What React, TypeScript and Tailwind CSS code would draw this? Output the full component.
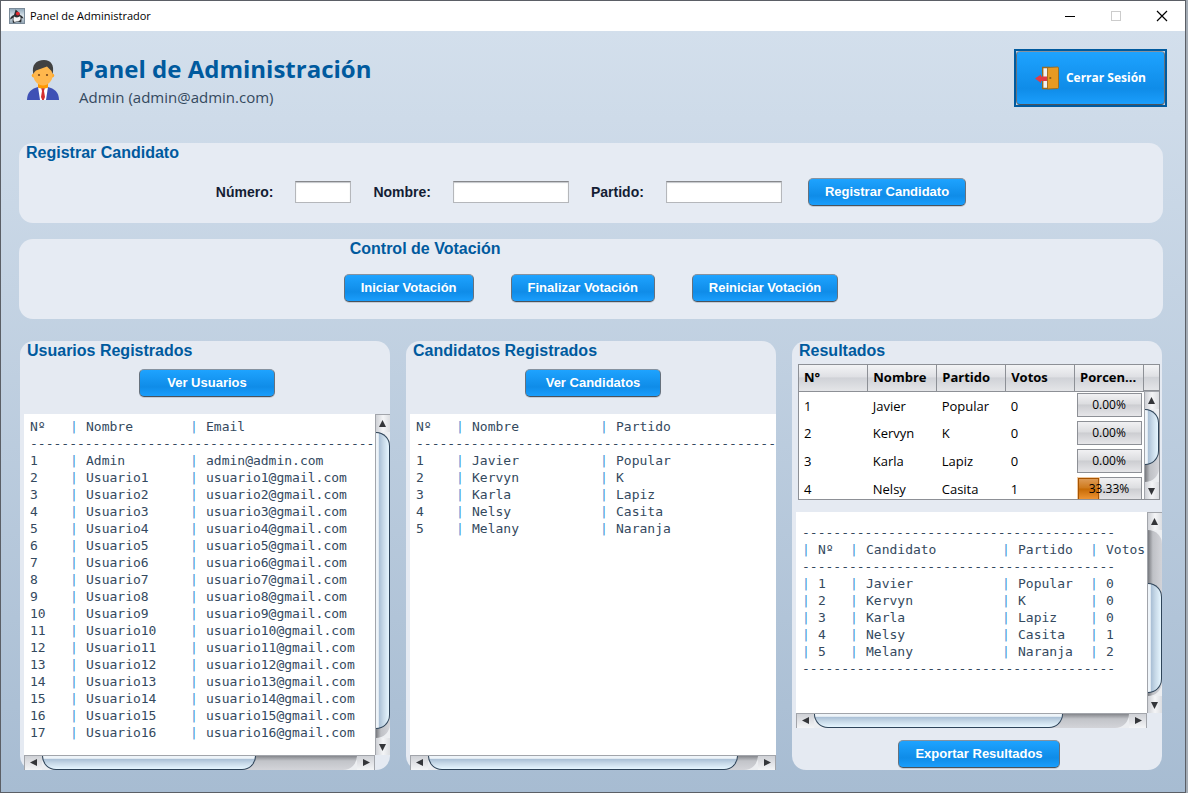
import type { ReactNode } from "react";

const UI_FONT = "font-['Open_Sans','Noto_Sans',sans-serif]";
const SANS_FONT = "font-['Liberation_Sans',Arial,sans-serif]";
const MONO_FONT = "font-['DejaVu_Sans_Mono','Liberation_Mono',monospace]";

const users = [
  ["1", "Admin", "admin@admin.com"],
  ...Array.from({ length: 16 }, (_, i) => [
    String(i + 2),
    `Usuario${i + 1}`,
    `usuario${i + 1}@gmail.com`,
  ]),
];

const candidates = [
  { id: "1", name: "Javier", party: "Popular", votes: 0, percent: 0 },
  { id: "2", name: "Kervyn", party: "K", votes: 0, percent: 0 },
  { id: "3", name: "Karla", party: "Lapiz", votes: 0, percent: 0 },
  { id: "4", name: "Nelsy", party: "Casita", votes: 1, percent: 33.33 },
  { id: "5", name: "Melany", party: "Naranja", votes: 2, percent: 66.67 },
];

const VISIBLE_RESULTS = 4;

function JavaIcon() {
  return (
    <svg width="16" height="16" viewBox="0 0 16 16" aria-hidden="true">
      <defs>
        <linearGradient id="java-bg" x1="0" y1="0" x2="0" y2="1">
          <stop offset="0" stopColor="#8ea6b8" />
          <stop offset="0.5" stopColor="#dde6ec" />
          <stop offset="1" stopColor="#8fa2b1" />
        </linearGradient>
      </defs>
      <rect x="0.5" y="0.5" width="15" height="15" fill="url(#java-bg)" stroke="#7b8b99" />
      <path d="M6.500 1.500 C8 2.500 10.500 4.500 11 7 C12.500 7.500 14 8.500 14.500 10.500 L12.500 10 C12.500 12.500 12.500 13.500 12 14.500 L9 13.500 L4 15 C3.500 13 3.500 11.500 4 10 L1 11.500 C1.500 9 3 7.500 5 7 C5.500 5 6.500 3 6.500 1.500 Z" fill="#2b2f33" />
      <path d="M5 8.500 C7.500 10 9.500 9.500 11 8.300 C12.300 10.500 11.500 12.800 9.500 13 L5.500 14 C4 12.500 4.300 10.500 5 8.500 Z" fill="#f5f5f5" />
      <circle cx="8.800" cy="5.600" r="1.900" fill="#e0282e" />
    </svg>
  );
}

function AdminAvatar() {
  return (
    <svg width="32" height="40" viewBox="0 0 32 40" aria-hidden="true">
      <path d="M0 40 C0 32 5 28.500 11 27 L21 27 C27 28.500 32 32 32 40 Z" fill="#3f51b5" />
      <path d="M11 27 L16 29 L21 27 L19 40 H13 Z" fill="#fff" />
      <path d="M11 23 H21 V27.500 C19 29 13 29 11 27.500 Z" fill="#ff9800" />
      <path d="M14.300 28.500 H17.700 L17 31 L18 37 L16.800 40 H15.200 L14 37 L15 31 Z" fill="#d32f2f" />
      <circle cx="6.800" cy="15.500" r="2" fill="#ffa726" />
      <circle cx="25.200" cy="15.500" r="2" fill="#ffa726" />
      <path d="M6.500 9 C6.500 4 25.500 4 25.500 9 V16 C25.500 20.500 21 25.500 16 25.500 C11 25.500 6.500 20.500 6.500 16 Z" fill="#ffb74d" />
      <path d="M6.300 14 C4.500 5 9 0 17 0 C24 0 27.500 5 25.700 14 L24.500 11 L20 6.500 L9 10.500 L7.500 12 Z" fill="#424242" />
      <circle cx="12" cy="15" r="1.100" fill="#784719" />
      <circle cx="20" cy="15" r="1.100" fill="#784719" />
    </svg>
  );
}

function DoorIcon() {
  return (
    <svg width="24" height="24" viewBox="0 0 24 24" aria-hidden="true">
      <path d="M7.700 1.500 H14 V22.500 H7.700 Z" fill="#f2f2f2" stroke="#9b6a1c" strokeWidth="1.400" />
      <path d="M12.500 1.500 L22.500 1 C23.200 1 23.500 1.400 23.500 2 V21.500 C23.500 22.200 23.200 22.500 22.500 22.500 L12.500 23 Z" fill="#e89a22" stroke="#9b6a1c" strokeWidth="0.900" />
      <circle cx="15.300" cy="12" r="1.100" fill="#8a5a14" />
      <path d="M0 12.500 L6 8.500 V10.500 H12 V15 H6 V17 Z" fill="#e23b45" />
    </svg>
  );
}

function ActionButton({ children, wide }: { children: ReactNode; wide?: boolean }) {
  return (
    <button
      type="button"
      className={`${SANS_FONT} ${wide ? "min-w-[136px]" : ""} h-7 rounded-[5px] border border-t-[#8592a0] border-x-[#66717d] border-b-[#4a535c] bg-[linear-gradient(to_bottom,#1ea3ff_0%,#0f8ce8_65%,#1a9efc_100%)] px-4 text-[13px] leading-6 font-bold whitespace-nowrap text-white shadow-[0_1px_0_#c5ccd6]`}
    >
      {children}
    </button>
  );
}

function CardTitle({ children }: { children: ReactNode }) {
  return (
    <h2 className={`${SANS_FONT} h-5 text-base leading-5 font-bold text-[#005a9e]`}>{children}</h2>
  );
}

function TextField({ id, label, width }: { id: string; label: string; width: string }) {
  return (
    <>
      <label htmlFor={id} className={`${SANS_FONT} text-sm font-bold text-[#141d33]`}>
        {label}
      </label>
      <input
        id={id}
        type="text"
        className={`${width} h-[22px] border border-[#b5b7bb] border-t-[#86888c] bg-white px-1 text-sm shadow-[inset_0_1px_1px_#c4c6ca] outline-none`}
      />
    </>
  );
}

function ScrollArrow({ direction }: { direction: "up" | "down" | "left" | "right" }) {
  const points = {
    up: "3,10 6.500,3 10,10",
    down: "3,4 6.500,11 10,4",
    left: "10,3 3,6.500 10,10",
    right: "4,3 11,6.500 4,10",
  }[direction];
  const names = { up: "Arriba", down: "Abajo", left: "Izquierda", right: "Derecha" };
  const vertical = direction === "up" || direction === "down";
  return (
    <button
      type="button"
      aria-label={names[direction]}
      className={`flex shrink-0 items-center justify-center ${
        vertical
          ? "h-[17px] w-full bg-[linear-gradient(to_right,#cfd1d6,#f4f5f7_50%,#dcdee2)]"
          : "h-full w-[17px] bg-[linear-gradient(to_bottom,#cfd1d6,#f4f5f7)]"
      }`}
    >
      <svg width="14" height="14" viewBox="0 0 14 14" aria-hidden="true">
        <polygon points={points} fill="#34363a" />
      </svg>
    </button>
  );
}

function VerticalBar({ before, thumb, after }: { before: number; thumb: number; after: number }) {
  return (
    <div className="flex w-[15px] shrink-0 flex-col border-t border-l border-[#a2a5ab] bg-[#eceef1]">
      <ScrollArrow direction="up" />
      <div className="flex min-h-0 flex-1 flex-col rounded-r-[14px] bg-[linear-gradient(to_right,#77797e,#bfc1c6_35%,#d3d4d9)]">
        <div style={{ flexGrow: before }} />
        <div
          className="rounded-r-[14px] border border-l-0 border-[#2f455a] bg-[linear-gradient(to_right,#eef4f9_0%,#eef4f9_18%,#a9bfd5_24%,#c6d8e7_55%,#e6f6ff_100%)]"
          style={{ flexGrow: thumb }}
        />
        <div style={{ flexGrow: after }} />
      </div>
      <ScrollArrow direction="down" />
    </div>
  );
}

function HorizontalBar({ thumb, after }: { thumb: number; after: number }) {
  return (
    <div className="flex h-[15px] min-w-0 flex-1 border-x border-t border-[#a2a5ab] bg-[#eceef1]">
      <ScrollArrow direction="left" />
      <div className="flex min-w-0 flex-1 rounded-b-[14px] bg-[linear-gradient(to_bottom,#85878c,#c2c4c9_35%,#d3d4d9)]">
        <div
          className="rounded-b-[14px] border border-t-0 border-[#2f455a] bg-[linear-gradient(to_bottom,#eef4f9_0%,#eef4f9_18%,#a9bfd5_24%,#c6d8e7_55%,#e6f6ff_100%)]"
          style={{ flexGrow: thumb }}
        />
        <div style={{ flexGrow: after }} />
      </div>
      <ScrollArrow direction="right" />
    </div>
  );
}

function Pipe() {
  return <span className="inline-block w-4 text-[#3d94d6]">|</span>;
}

type Column = { title: string; width: string; pipe?: boolean };

function TextTable({
  columns,
  rows,
  dashes,
  framed,
}: {
  columns: Column[];
  rows: string[][];
  dashes: number;
  framed?: boolean;
}) {
  const rule = (
    <tr className="h-[17px]">
      <td colSpan={columns.length} className="p-0">
        {"-".repeat(dashes)}
      </td>
    </tr>
  );
  return (
    <table
      className={`${MONO_FONT} w-[360px] table-fixed border-collapse text-left text-[13px] leading-[17px] whitespace-pre text-[#34495e]`}
    >
      <colgroup>
        {columns.map((column) => (
          <col key={column.title} className={column.width} />
        ))}
      </colgroup>
      <thead>
        {framed && rule}
        <tr className="h-[17px]">
          {columns.map((column) => (
            <th key={column.title} className="p-0 font-normal">
              {column.pipe && <Pipe />}
              {column.title}
            </th>
          ))}
        </tr>
      </thead>
      <tbody>
        {rule}
        {rows.map((row) => (
          <tr key={row[0]} className="h-[17px]">
            {row.map((cell, i) => (
              <td key={i} className="p-0">
                {columns[i].pipe && <Pipe />}
                {cell}
              </td>
            ))}
          </tr>
        ))}
        {framed && rule}
      </tbody>
    </table>
  );
}

function PercentBar({ value }: { value: number }) {
  return (
    <div
      role="progressbar"
      aria-valuenow={value}
      className="relative mx-[2px] h-6 border border-[#8d9096] bg-[linear-gradient(to_bottom,#f1f1f3_0%,#dcdde0_45%,#cccdd1_50%,#e6e6e9_100%)]"
    >
      {value > 0 && (
        <div
          className="absolute inset-y-0 left-0 border border-[#a85400] bg-[linear-gradient(to_bottom,#dd9a55_0%,#cf7a1c_45%,#c66a05_50%,#ee9433_100%)] shadow-[0_0_0_1px_#f0c9a0]"
          style={{ width: `${value}%` }}
        />
      )}
      <span className="relative block text-center text-xs leading-[22px]">{value.toFixed(2)}%</span>
    </div>
  );
}

function ResultsTable() {
  const headings = ["N°", "Nombre", "Partido", "Votos", "Porcen..."];
  return (
    <div className={`${UI_FONT} mx-[2px] border border-[#8d9096] bg-white text-[13px] text-black`}>
      <div className="flex h-[134px] overflow-hidden">
        <table className="flex-1 table-fixed border-collapse text-left">
          <thead>
            <tr className="h-[26px] bg-[linear-gradient(to_bottom,#f3f4f6_0%,#dfe0e4_45%,#d0d2d7_50%,#e4e5e8_100%)]">
              {headings.map((heading) => (
                <th
                  key={heading}
                  className="w-[69px] border-r border-b border-[#8d9096] py-0 pr-0 pl-[5px] leading-[25px] font-bold whitespace-nowrap"
                >
                  {heading}
                </th>
              ))}
            </tr>
          </thead>
          <tbody>
            {candidates.slice(0, VISIBLE_RESULTS).map((candidate) => (
              <tr key={candidate.id} className="h-7">
                <td className="pt-[2px] pb-0 pl-[5px]">{candidate.id}</td>
                <td className="pt-[2px] pb-0 pl-[5px]">{candidate.name}</td>
                <td className="pt-[2px] pb-0 pl-[5px]">{candidate.party}</td>
                <td className="pt-[2px] pb-0 pl-[5px]">{candidate.votes}</td>
                <td className="p-0">
                  <PercentBar value={candidate.percent} />
                </td>
              </tr>
            ))}
          </tbody>
        </table>
        <div className="flex w-[15px] flex-col">
          <div className="h-[26px] border-b border-[#8d9096] bg-[linear-gradient(to_bottom,#f3f4f6_0%,#dfe0e4_45%,#d0d2d7_50%,#e4e5e8_100%)]" />
          <div className="flex flex-1">
            <VerticalBar before={0} thumb={56} after={18} />
          </div>
        </div>
      </div>
    </div>
  );
}

export default function App() {
  return (
    <div className="flex min-h-screen bg-[#a4acb5] pr-[2px]">
      <div className="flex min-w-0 flex-1 flex-col border border-[#5b5f66]">
        <header className="flex h-[30px] shrink-0 items-center bg-white pr-[17px] pl-2">
          <JavaIcon />
          <span className={`${UI_FONT} ml-[5px] flex-1 text-[11px] text-black`}>Panel de Administrador</span>
          <div className="flex items-center gap-[34px]">
            <button type="button" aria-label="Minimizar">
              <svg width="12" height="12" viewBox="0 0 12 12" aria-hidden="true">
                <path d="M1 6.500 H11" stroke="#000" />
              </svg>
            </button>
            <button type="button" aria-label="Maximizar" disabled>
              <svg width="12" height="12" viewBox="0 0 12 12" aria-hidden="true">
                <rect x="1.500" y="1.500" width="9" height="9" fill="none" stroke="#ccc" />
              </svg>
            </button>
            <button type="button" aria-label="Cerrar">
              <svg width="12" height="12" viewBox="0 0 12 12" aria-hidden="true">
                <path d="M1 1 L11 11 M11 1 L1 11" stroke="#000" strokeWidth="1.200" />
              </svg>
            </button>
          </div>
        </header>

        <main className="flex flex-1 flex-col bg-[linear-gradient(to_bottom,#d3dfec,#a7bcd2)] pr-[22px] pb-[22px] pl-[18px]">
          <div className="-mr-1 flex h-28 shrink-0 items-start justify-between pt-[18px] pl-2">
            <div className="flex items-start gap-5">
              <div className="pt-[11px]">
                <AdminAvatar />
              </div>
              <div className={UI_FONT}>
                <h1 className="mt-1 text-2xl leading-8 font-bold text-[#005a9e]">Panel de Administración</h1>
                <p className="text-[15px] leading-6 text-[#34495e]">Admin (admin@admin.com)</p>
              </div>
            </div>
            <button type="button" className="border-2 border-[#005a9e] bg-[#c9d6e4]">
              <span
                className={`${UI_FONT} flex h-[54px] items-center gap-[7px] rounded-[4px] border border-t-[#8592a0] border-x-[#66717d] border-b-[#4a535c] bg-[linear-gradient(to_bottom,#1ea3ff_0%,#0f8ce8_70%,#1a9efc_100%)] px-[18px] text-xs font-bold text-white`}
              >
                <DoorIcon />
                Cerrar Sesión
              </span>
            </button>
          </div>

          <section className="h-20 shrink-0 rounded-[14px] bg-[#e6ebf3] px-[7px]">
            <CardTitle>Registrar Candidato</CardTitle>
            <form className="mt-[15px] flex items-center justify-center gap-[22px]">
              <TextField id="numero" label="Número:" width="w-14" />
              <TextField id="nombre" label="Nombre:" width="w-[116px]" />
              <TextField id="partido" label="Partido:" width="w-[116px]" />
              <div className="pl-1">
                <ActionButton>Registrar Candidato</ActionButton>
              </div>
            </form>
          </section>

          <section className="mt-4 flex h-20 shrink-0 justify-center rounded-[14px] bg-[#e6ebf3]">
            <div>
              <div className="pl-[6px]">
                <CardTitle>Control de Votación</CardTitle>
              </div>
              <div className="mt-[15px] flex gap-[37px]">
                <ActionButton>Iniciar Votación</ActionButton>
                <ActionButton>Finalizar Votación</ActionButton>
                <ActionButton>Reiniciar Votación</ActionButton>
              </div>
            </div>
          </section>

          <div className="mt-[22px] grid flex-1 grid-cols-3 gap-4 px-px">
            <section className="flex min-w-0 flex-col rounded-[14px] bg-[#e5eaf2] pl-1">
              <div className="pl-[3px]">
                <CardTitle>Usuarios Registrados</CardTitle>
              </div>
              <div className="mt-2 mb-[17px] flex justify-center">
                <ActionButton wide>Ver Usuarios</ActionButton>
              </div>
              <div className="flex flex-1">
                <div className="min-w-0 flex-1 overflow-hidden bg-white pt-1 pb-[14px] pl-[6px]">
                  <TextTable
                    columns={[
                      { title: "Nº", width: "w-10" },
                      { title: "Nombre", width: "w-[120px]", pipe: true },
                      { title: "Email", width: "w-[200px]", pipe: true },
                    ]}
                    rows={users}
                    dashes={44}
                  />
                </div>
                <VerticalBar before={0} thumb={297} after={9} />
              </div>
              <div className="flex pr-[15px]">
                <HorizontalBar thumb={215} after={102} />
              </div>
            </section>

            <section className="flex min-w-0 flex-col rounded-tl-[14px] rounded-tr-[14px] rounded-bl-[14px] bg-[#e5eaf2] pl-1">
              <div className="pl-[3px]">
                <CardTitle>Candidatos Registrados</CardTitle>
              </div>
              <div className="mt-2 mb-[17px] flex justify-center">
                <ActionButton wide>Ver Candidatos</ActionButton>
              </div>
              <div className="flex-1 overflow-hidden bg-white pt-1 pl-[6px]">
                <TextTable
                  columns={[
                    { title: "Nº", width: "w-10" },
                    { title: "Nombre", width: "w-36", pipe: true },
                    { title: "Partido", width: "w-44", pipe: true },
                  ]}
                  rows={candidates.map((c) => [c.id, c.name, c.party])}
                  dashes={46}
                />
              </div>
              <div className="flex">
                <HorizontalBar thumb={312} after={20} />
              </div>
            </section>

            <section className="flex min-w-0 flex-col rounded-[14px] bg-[#e5eaf2] pb-[2px] pl-1">
              <div className="mb-[3px] pl-[3px]">
                <CardTitle>Resultados</CardTitle>
              </div>
              <ResultsTable />
              <div className="mt-3 flex flex-1">
                <div className="min-w-0 flex-1 overflow-hidden bg-white pt-3 pl-[6px]">
                  <TextTable
                    framed
                    columns={[
                      { title: "Nº", width: "w-12", pipe: true },
                      { title: "Candidato", width: "w-[152px]", pipe: true },
                      { title: "Partido", width: "w-[88px]", pipe: true },
                      { title: "Votos", width: "w-[72px]", pipe: true },
                    ]}
                    rows={candidates.map((c) => [c.id, c.name, c.party, String(c.votes)])}
                    dashes={40}
                  />
                </div>
                <VerticalBar before={54} thumb={110} after={3} />
              </div>
              <div className="flex pr-[15px]">
                <HorizontalBar thumb={250} after={67} />
              </div>
              <div className="mt-3 flex justify-center">
                <ActionButton>Exportar Resultados</ActionButton>
              </div>
            </section>
          </div>
        </main>
      </div>
    </div>
  );
}
